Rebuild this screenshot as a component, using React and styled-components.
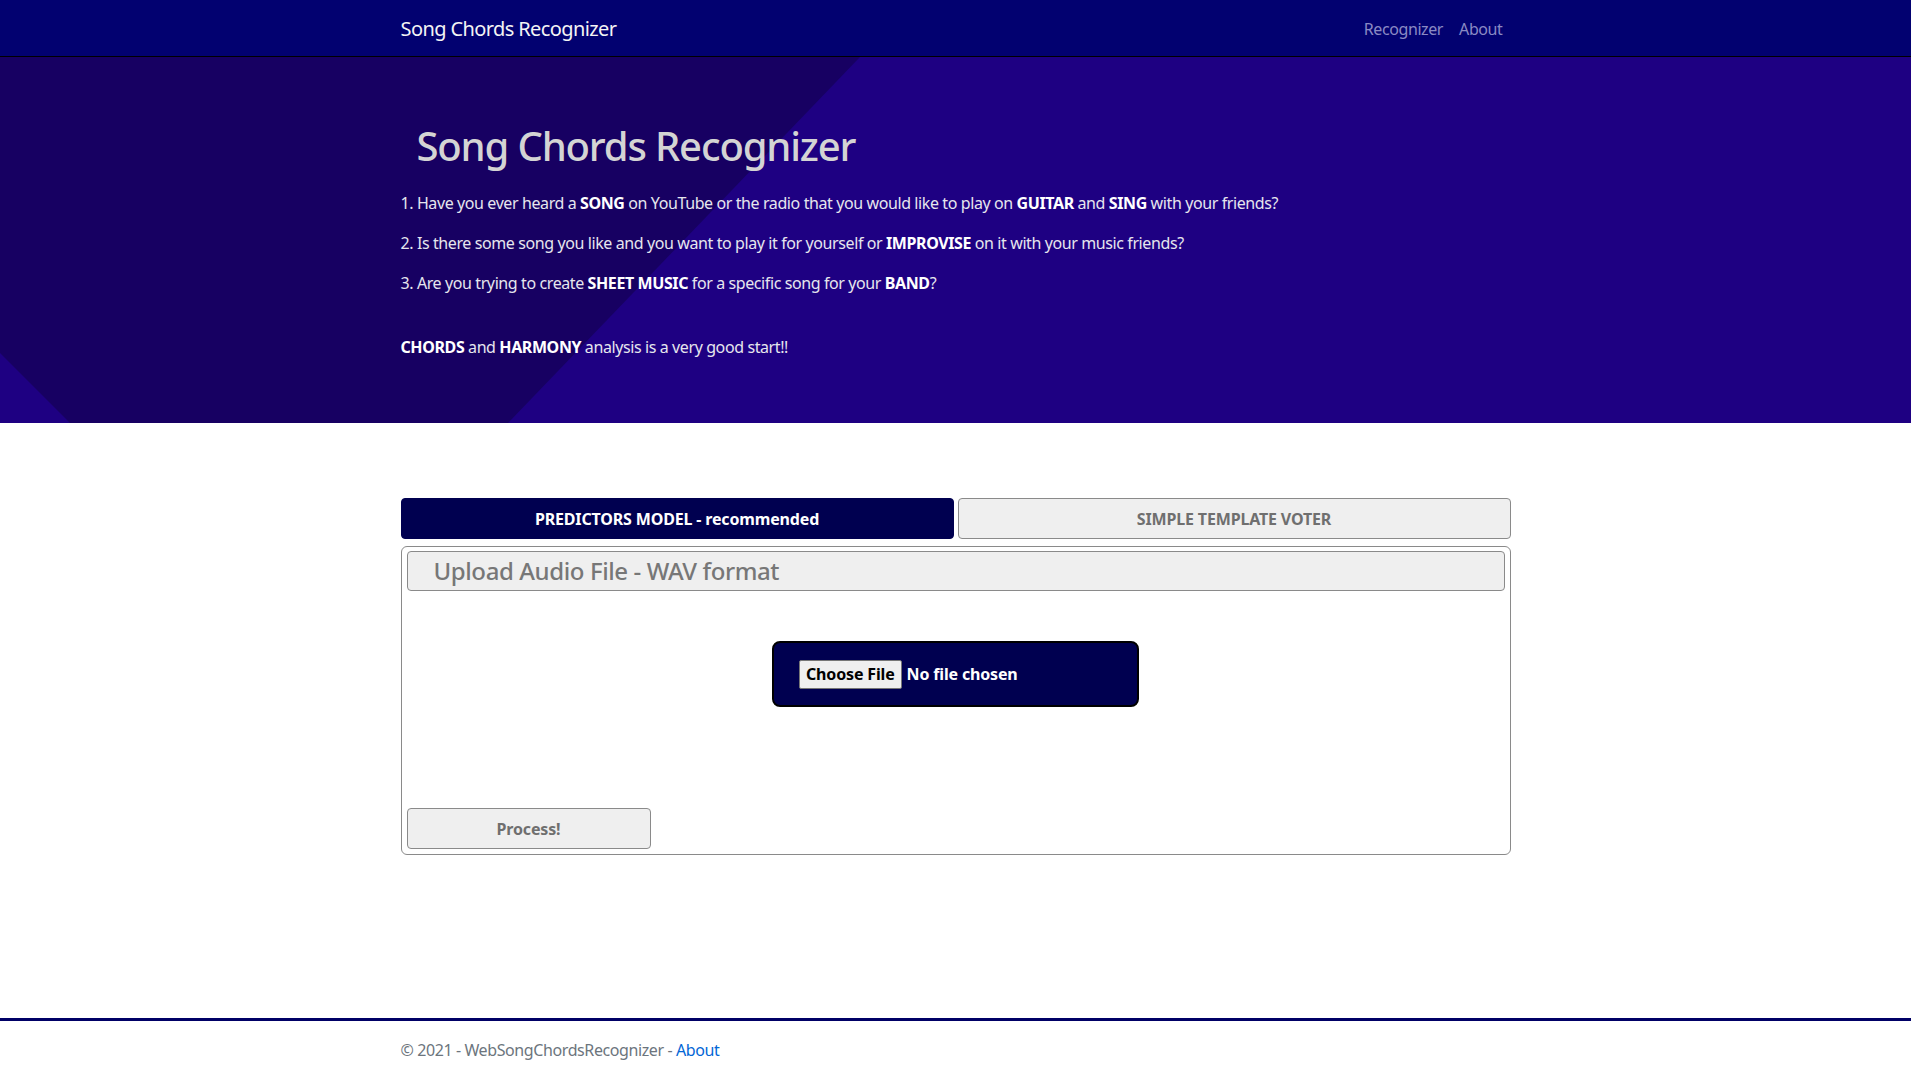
import React from "react";
import styled, { createGlobalStyle } from "styled-components";

const GlobalStyle = createGlobalStyle`
  * {
    box-sizing: border-box;
  }
  body {
    margin: 0;
    font-family: "Segoe UI", "Noto Sans", "Open Sans", sans-serif;
    font-size: 16px;
    line-height: 1.5;
    letter-spacing: -0.025em;
    color: #212529;
    background: #fff;
  }
`;

const Page = styled.div`
  min-height: 100vh;
  display: flex;
  flex-direction: column;
`;

const Container = styled.div`
  width: 1140px;
  margin: 0 auto;
  padding: 0 15px;
`;

const NavBar = styled.header`
  background: #020170;
  border-bottom: 1px solid #000;
  height: 57px;
  ${Container} {
    height: 56px;
    display: flex;
    align-items: center;
    justify-content: space-between;
    padding-top: 1px;
  }
`;

const Brand = styled.a`
  color: #f4f4f4;
  font-size: 20px;
  letter-spacing: -0.03em;
  text-decoration: none;
`;

const NavLinks = styled.nav`
  display: flex;
`;

const NavLink = styled.a`
  color: #8a8ac4;
  text-decoration: none;
  padding: 0 8px;
`;

const Hero = styled.section`
  position: relative;
  overflow: hidden;
  background: #1e0082;
  padding: 65px 0 48px;
  &::before {
    content: "";
    position: absolute;
    inset: 0;
    background: #170062;
    clip-path: polygon(0 0, 860px 0, 508px 366px, 70px 366px, 0 296px);
  }
  ${Container} {
    position: relative;
  }
`;

const HeroTitle = styled.h1`
  margin: 0 0 21px;
  padding-left: 16px;
  font-size: 40px;
  font-weight: 500;
  line-height: 1.2;
  letter-spacing: -0.029em;
  color: #d4d4d4;
`;

const HeroText = styled.p`
  margin: 0 0 16px;
  color: #e6e6ee;
  b {
    color: #fff;
    font-weight: 700;
  }
`;

const Main = styled.main`
  flex: 1;
  padding-top: 75px;
`;

const Tabs = styled.div`
  display: grid;
  grid-template-columns: 1fr 1fr;
  gap: 4px;
  margin-bottom: 7px;
`;

const Tab = styled.button`
  height: 41px;
  border-radius: 4px;
  font-family: inherit;
  font-size: 16px;
  font-weight: 700;
  letter-spacing: -0.01em;
  cursor: pointer;
  border: 1px solid ${(p) => (p.$active ? "#000050" : "#8a8a8a")};
  background: ${(p) => (p.$active ? "#000050" : "#efefef")};
  color: ${(p) => (p.$active ? "#fff" : "#6f6f6f")};
`;

const Panel = styled.div`
  border: 1px solid #8a8a8a;
  border-radius: 6px;
  padding: 4px 5px 5px;
  display: flex;
  flex-direction: column;
`;

const PanelHeader = styled.h4`
  margin: 0;
  height: 40px;
  padding: 0 26px;
  display: flex;
  align-items: center;
  background: #efefef;
  border: 1px solid #8a8a8a;
  border-radius: 4px;
  font-size: 24px;
  font-weight: 500;
  color: #777;
`;

const UploadBox = styled.label`
  align-self: center;
  margin: 50px 0 101px;
  width: 367px;
  height: 66px;
  background: #000050;
  border: 2px solid #000;
  border-radius: 8px;
  display: flex;
  align-items: center;
  padding-left: 25px;
  gap: 5px;
  cursor: pointer;
  input {
    display: none;
  }
`;

const ChooseButton = styled.span`
  background: #efefef;
  border: 1px solid #767676;
  border-radius: 2px;
  color: #000;
  font-size: 16px;
  font-weight: 700;
  letter-spacing: -0.01em;
  line-height: 27px;
  padding: 0 6px;
`;

const FileName = styled.span`
  color: #fff;
  font-size: 16px;
  font-weight: 700;
  letter-spacing: -0.01em;
`;

const ProcessButton = styled.button`
  width: 244px;
  height: 41px;
  background: #efefef;
  border: 1px solid #8a8a8a;
  border-radius: 4px;
  font-family: inherit;
  font-size: 16px;
  font-weight: 700;
  letter-spacing: -0.01em;
  color: #6f6f6f;
  cursor: pointer;
`;

const Footer = styled.footer`
  border-top: 3px solid #000066;
  line-height: 59px;
  color: #6c757d;
  font-size: 16px;
  a {
    color: #0366d6;
    text-decoration: none;
  }
`;

const App = () => {
  return (
    <Page>
      <GlobalStyle />
      <NavBar>
        <Container>
          <Brand href="#">Song Chords Recognizer</Brand>
          <NavLinks>
            <NavLink href="#">Recognizer</NavLink>
            <NavLink href="#">About</NavLink>
          </NavLinks>
        </Container>
      </NavBar>
      <Hero>
        <Container>
          <HeroTitle>Song Chords Recognizer</HeroTitle>
          <HeroText>
            1. Have you ever heard a <b>SONG</b> on YouTube or the radio that you would like to play on{" "}
            <b>GUITAR</b> and <b>SING</b> with your friends?
          </HeroText>
          <HeroText>
            2. Is there some song you like and you want to play it for yourself or <b>IMPROVISE</b> on it with
            your music friends?
          </HeroText>
          <HeroText>
            3. Are you trying to create <b>SHEET MUSIC</b> for a specific song for your <b>BAND</b>?
          </HeroText>
          <br />
          <HeroText>
            <b>CHORDS</b> and <b>HARMONY</b> analysis is a very good start!!
          </HeroText>
        </Container>
      </Hero>
      <Main>
        <Container>
          <Tabs>
            <Tab $active>PREDICTORS MODEL - recommended</Tab>
            <Tab>SIMPLE TEMPLATE VOTER</Tab>
          </Tabs>
          <Panel>
            <PanelHeader>Upload Audio File - WAV format</PanelHeader>
            <UploadBox>
              <input type="file" accept=".wav" />
              <ChooseButton>Choose File</ChooseButton>
              <FileName>No file chosen</FileName>
            </UploadBox>
            <ProcessButton>Process!</ProcessButton>
          </Panel>
        </Container>
      </Main>
      <Footer>
        <Container>
          © 2021 - WebSongChordsRecognizer - <a href="#">About</a>
        </Container>
      </Footer>
    </Page>
  );
};

export default App;
